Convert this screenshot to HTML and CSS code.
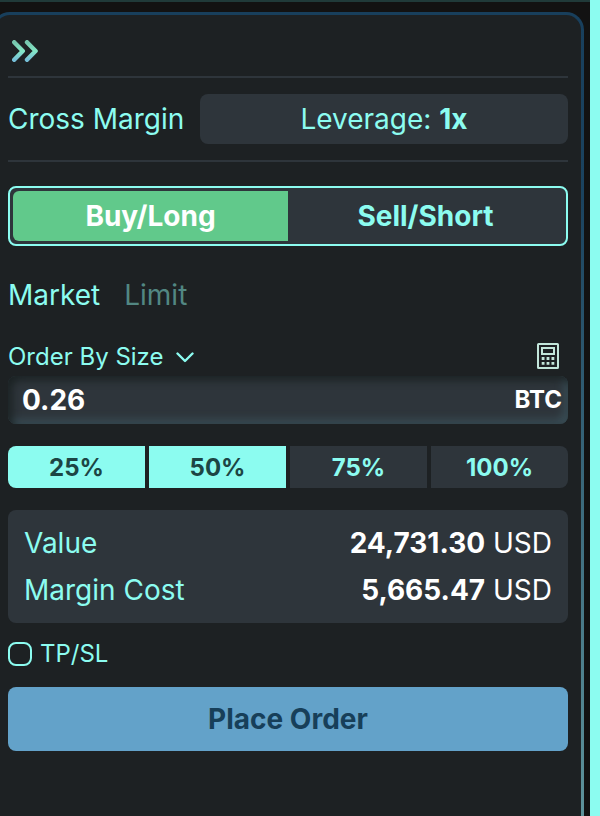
FILE: index.html
```html
<!DOCTYPE html>
<html lang="en">
<head>
  <meta charset="UTF-8" />
  <meta name="viewport" content="width=device-width, initial-scale=1.0"/>
  <title>Place Order</title>
  <link rel="stylesheet" href="styles.css">
</head>
<body>
  <div class="screen">
    <div class="panel-border">
      <main class="panel">
        <div class="collapse">
          <svg width="26" height="22" viewBox="0 0 26 22" fill="none" stroke-width="4.4" stroke-linecap="round" stroke-linejoin="round">
            <defs>
              <linearGradient id="chevron" x1="0" y1="0" x2="0" y2="1">
                <stop offset="0" stop-color="#76c5ad"/>
                <stop offset="0.5" stop-color="#84e8c6"/>
                <stop offset="1" stop-color="#76bfd8"/>
              </linearGradient>
            </defs>
            <path stroke="url(#chevron)" d="M2.2 2.2l8.6 8.8-8.6 8.8"/>
            <path stroke="url(#chevron)" d="M15 2.2l8.6 8.8-8.6 8.8"/>
          </svg>
        </div>

        <div class="margin-row">
          <span class="margin-mode">Cross Margin</span>
          <button class="leverage">Leverage: <b>1x</b></button>
        </div>

        <div class="side-toggle">
          <button class="side buy">Buy/Long</button>
          <button class="side sell">Sell/Short</button>
        </div>

        <div class="tabs">
          <span class="tab active">Market</span>
          <span class="tab">Limit</span>
        </div>

        <div class="order-by">
          <span class="order-label">Order By Size</span>
          <svg class="caret" width="18" height="11" viewBox="0 0 18 11" fill="none" stroke="#8cfcf0" stroke-width="2.4" stroke-linecap="round" stroke-linejoin="round">
            <path d="M1.5 1.5l7.5 7.5 7.5-7.5"/>
          </svg>
          <svg class="calculator" width="22" height="26" viewBox="0 0 22 26" fill="none" stroke="#c2e6da" stroke-width="2">
            <rect x="1" y="1" width="20" height="24" rx="0.6"/>
            <rect x="5" y="5" width="12" height="6"/>
            <path stroke-width="2.8" d="M4.7 15.5h2.8M9.6 15.5h2.8M14.5 15.5h2.8M4.7 20.3h2.8M9.6 20.3h2.8M14.5 20.3h2.8"/>
          </svg>
        </div>

        <div class="amount">
          <span class="amount-value">0.26</span>
          <span class="amount-unit">BTC</span>
        </div>

        <div class="percents">
          <button class="percent filled">25%</button>
          <button class="percent filled">50%</button>
          <button class="percent">75%</button>
          <button class="percent">100%</button>
        </div>

        <div class="summary">
          <div class="summary-row">
            <span>Value</span>
            <span class="money"><b>24,731.30</b> USD</span>
          </div>
          <div class="summary-row">
            <span>Margin Cost</span>
            <span class="money"><b>5,665.47</b> USD</span>
          </div>
        </div>

        <div class="tpsl">
          <span class="checkbox"></span>
          <span class="tpsl-label">TP/SL</span>
        </div>

        <button class="place-order">Place Order</button>
      </main>
    </div>
  </div>
</body>
</html>
```

FILE: styles.css
```css
* {
  box-sizing: border-box;
  margin: 0;
  padding: 0;
  font-family: Inter, 'Liberation Sans', sans-serif;
}

body {
  background: #8cfcf0;
  width: 600px;
  height: 816px;
  overflow: hidden;
}

.screen {
  width: 590px;
  height: 816px;
  padding-top: 10px;
  background: #121212;
  border-top: 2px solid #203a39;
  overflow: hidden;
}

.panel-border {
  width: 592px;
  height: 860px;
  margin-left: -8px;
  padding: 3px;
  border-radius: 18px;
  background: linear-gradient(#183f5c 0%, #1b435f 22%, #5e939b 94%);
}

.panel {
  height: 100%;
  padding: 0 13px;
  border-radius: 15px;
  background: #1d2123;
  color: #8cfcf0;
  font-size: 28px;
}

button {
  border: none;
  color: #8cfcf0;
  font-size: 28px;
}

.collapse {
  height: 63px;
  padding: 25px 0 0 4px;
  border-bottom: 2px solid #2e353b;
}

.collapse svg {
  display: block;
}

.margin-row {
  display: flex;
  align-items: center;
  justify-content: space-between;
  height: 84px;
  border-bottom: 2px solid #2e353b;
}

.leverage {
  width: 368px;
  height: 50px;
  border-radius: 8px;
  background: #2e353b;
}

.side-toggle {
  display: flex;
  height: 60px;
  margin-top: 24px;
  padding: 3px;
  border: 2px solid #8cfcf0;
  border-radius: 8px;
  background: #2e353b;
}

.side {
  flex: 1;
  background: none;
  font-weight: 700;
}

.buy {
  border-radius: 6px 0 0 6px;
  background: #61c98b;
  color: #fff;
}

.tabs {
  display: flex;
  gap: 24px;
  margin-top: 32px;
  line-height: 34px;
}

.tab {
  color: #528782;
}

.tab.active {
  color: #8cfcf0;
}

.order-by {
  display: flex;
  align-items: center;
  height: 30px;
  margin-top: 29px;
  font-size: 24px;
}

.caret {
  margin-left: 12px;
  margin-top: 2px;
}

.calculator {
  margin-left: auto;
  margin-right: 9px;
}

.amount {
  display: flex;
  align-items: center;
  justify-content: space-between;
  height: 48px;
  margin-top: 5px;
  padding: 0 6px 0 14px;
  border-radius: 8px;
  background: #2e353b;
  box-shadow: inset 4px 4px 8px #1b2223, inset -4px -4px 8px #3b5059;
  color: #fff;
  font-weight: 700;
}

.amount-unit {
  padding-bottom: 2px;
  font-size: 24px;
}

.percents {
  display: grid;
  grid-template-columns: repeat(4, 1fr);
  gap: 4px;
  margin-top: 22px;
}

.percent {
  height: 42px;
  background: #2e353b;
  font-size: 24px;
  font-weight: 700;
}

.percent:first-child {
  border-radius: 8px 0 0 8px;
}

.percent:last-child {
  border-radius: 0 8px 8px 0;
}

.percent.filled {
  background: #8cfcf0;
  color: #1c4544;
}

.summary {
  height: 113px;
  margin-top: 22px;
  padding: 10px 16px;
  border-radius: 8px;
  background: #2e353b;
}

.summary-row {
  display: flex;
  justify-content: space-between;
  line-height: 47px;
}

.money {
  color: #fff;
}

.tpsl {
  display: flex;
  align-items: center;
  gap: 8px;
  height: 24px;
  margin-top: 19px;
  font-size: 24px;
}

.tpsl-label {
  padding-bottom: 2px;
}

.checkbox {
  width: 24px;
  height: 24px;
  border: 2px solid #8cfcf0;
  border-radius: 8px;
}

.place-order {
  display: block;
  width: 100%;
  height: 64px;
  margin-top: 21px;
  border-radius: 8px;
  background: #63a2c9;
  color: #173f59;
  font-weight: 700;
}
```
